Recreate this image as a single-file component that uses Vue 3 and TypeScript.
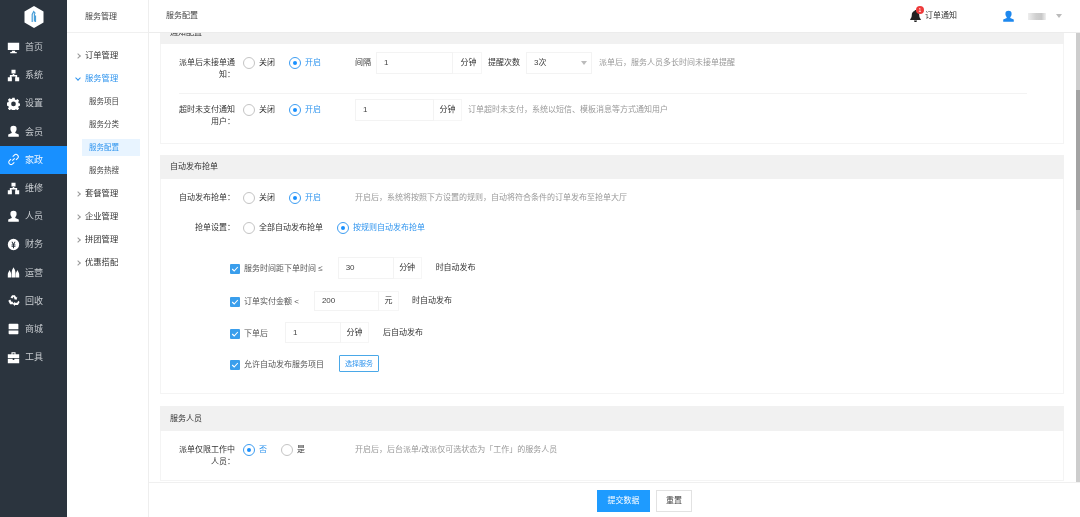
<script setup lang="ts">
interface NavItem { label: string; icon: string; active?: boolean }
const monitor = 'M1 2h14v9H1z M6 12h4v1.5h2V15H4v-1.5h2z'
const tree = 'M5.5 1h5v4.5h-5z M1 10h5v5H1z M10 10h5v5h-5z M7 5h2v2.5h3.5V10h-2V9.2h-5V10h-2V7.5H7z'
const gear = 'M6.6 1h2.8l.4 2 1.3.6 1.8-1.1 2 2-1.1 1.8.6 1.3 2 .4v2.8l-2 .4-.6 1.3 1.1 1.8-2 2-1.8-1.1-1.3.6-.4 2H6.6l-.4-2-1.3-.6-1.8 1.1-2-2 1.1-1.8-.6-1.3-2-.4V7l2-.4.6-1.3-1.1-1.8 2-2 1.8 1.1 1.3-.6zM8 5.6a2.9 2.9 0 1 0 0 5.8 2.9 2.9 0 0 0 0-5.8z'
const user = 'M8 1a3.8 3.8 0 0 1 3.8 4c0 1.6-.7 3-1.6 3.8v1l4.3 2v2.7h-13v-2.7l4.300-2v-1C5 8 4.200 6.600 4.200 5A3.800 3.800 0 0 1 8 1z'
const coin = 'M8 1a7 7 0 1 1 0 14A7 7 0 0 1 8 1zM5.500 4.500 7.200 8H5.600v1.100h1.800V10H5.600v1.100h1.800v1.400h1.200v-1.400h1.800V10H8.600v-.9h1.800V8H8.800l1.700-3.500H9.200L8 7.200 6.800 4.500z'
const flame = 'M3 5c.8 1.600 2.200 3 2.200 5.500V14H1v-3.500C1 8.500 2.400 7 3 5z M8 1.500c.9 2 2.400 3.500 2.400 6.500v6H5.800V8C5.800 5 7.100 3.500 8 1.500z M13 5c.6 2 2 3.500 2 5.500V14h-4.200v-3.500C10.800 8 12.200 6.600 13 5z'
const recycle = 'M6.300 1.500h3.400l1.700 2.800 1.300-.8-.9 3.700-3.700-.9 1.300-.8L8 3.400 6.700 5.600 4.300 4.200z M1.600 8.300l2.400-1.400 1.500 2.600H7.300v3.200H3.800z M14.500 8.300l.9 1.800-1.900 3.300H9.600V15l-2.500-3 2.500-2.600v1.300h2.900l.6-1.100z'
const inbox = 'M3 2h10a1 1 0 0 1 1 1v6H2V3a1 1 0 0 1 1-1z M2 10.500h12V14a1 1 0 0 1-1 1H3a1 1 0 0 1-1-1z'
const briefcase = 'M5.500 1.500h5v2.500H15v4.500H1V4h4.500zM6.800 2.800V4h2.400V2.800z M1 9.500h6v1.500h2V9.500h6V15H1z'
const nav: NavItem[] = [
  { label: '首页', icon: monitor },
  { label: '系统', icon: tree },
  { label: '设置', icon: gear },
  { label: '会员', icon: user },
  { label: '家政', icon: '', active: true },
  { label: '维修', icon: tree },
  { label: '人员', icon: user },
  { label: '财务', icon: coin },
  { label: '运营', icon: flame },
  { label: '回收', icon: recycle },
  { label: '商城', icon: inbox },
  { label: '工具', icon: briefcase },
]
const subTop = ['订单管理']
const subLeaf = ['服务项目', '服务分类', '服务配置', '服务热搜']
const subBottom = ['套餐管理', '企业管理', '拼团管理', '优惠搭配']
const ruleRows = [
  { before: '服务时间距下单时间 ≤', value: '30', unit: '分钟', after: '时自动发布', cls: 'r1' },
  { before: '订单实付金额 <', value: '200', unit: '元', after: '时自动发布', cls: 'r2' },
  { before: '下单后', value: '1', unit: '分钟', after: '后自动发布', cls: 'r3' },
]
</script>

<template>
  <div class="app">
    <aside class="nav">
      <div class="logo">
        <svg width="20" height="22" viewBox="0 0 20 22">
          <path d="M10 0l9.500 5.500v11L10 22 .5 16.500v-11z" fill="#fff" />
          <path d="M8.200 16V8.500l1.500-3 1.300 1.500-.6 1v7.500M11.500 9.500V16" fill="none" stroke="#4a9fd8" stroke-width="1.200" />
        </svg>
      </div>
      <div v-for="item in nav" :key="item.label" class="nav-item" :class="{ active: item.active }">
        <svg class="nav-icon" width="13" height="13" viewBox="0 0 16 16">
          <path v-if="item.icon" :d="item.icon" fill="#fff" fill-rule="evenodd" />
          <g v-else fill="none" stroke="#fff" stroke-width="1.300">
            <path d="M6.500 9.500l3-3" />
            <path d="M7 4.500l2-2a2.800 2.800 0 0 1 4 4l-2 2" />
            <path d="M9 11.500l-2 2a2.800 2.800 0 0 1-4-4l2-2" />
          </g>
        </svg>
        <span>{{ item.label }}</span>
      </div>
    </aside>

    <aside class="sub">
      <div class="sub-title">服务管理</div>
      <div class="sub-list">
        <div v-for="s in subTop" :key="s" class="sub-group"><i class="chev"></i>{{ s }}</div>
        <div class="sub-group open"><i class="chev down"></i>服务管理</div>
        <div v-for="s in subLeaf" :key="s" class="sub-leaf" :class="{ on: s === '服务配置' }">{{ s }}</div>
        <div v-for="s in subBottom" :key="s" class="sub-group"><i class="chev"></i>{{ s }}</div>
      </div>
    </aside>

    <main class="main">
      <header class="top">
        <span class="crumb">服务配置</span>
        <div class="notice">
          <span class="bell">
            <svg width="11" height="12" viewBox="0 0 11 12"><path d="M5.500 0c.6 0 1 .4 1 .9C8.300 1.400 9.200 3 9.200 4.800c0 2 .4 3.200 1.600 4.400v.8H.2v-.8C1.400 8 1.800 6.800 1.800 4.800 1.800 3 2.700 1.400 4.500.9c0-.5.4-.9 1-.9zM4 10.600h3A1.500 1.500 0 0 1 4 10.600z" fill="#222" /></svg>
            <b class="badge">1</b>
          </span>
          <span>订单通知</span>
        </div>
        <div class="account">
          <svg class="avatar" width="13" height="13" viewBox="0 0 16 16"><path :d="user" fill="#1e88ee" /></svg>
          <span class="masked"></span>
          <i class="caret"></i>
        </div>
      </header>

      <div class="scroll">
        <section class="panel first">
          <div class="head clipped">通知配置</div>
          <div class="row a1">
            <label class="lbl">派单后未接单通知&#xFF1A;</label>
            <div class="radios">
              <span class="radio"><i></i>关闭</span>
              <span class="radio on"><i></i>开启</span>
            </div>
            <span class="txt">间隔</span>
            <span class="field w77"><em>1</em></span><span class="addon w29">分钟</span>
            <span class="txt g6">提醒次数</span>
            <span class="field sel"><em>3次</em><i class="caret"></i></span>
            <span class="hint g7">派单后&#xFF0C;服务人员多长时间未接单提醒</span>
          </div>
          <div class="row a2">
            <label class="lbl">超时未支付通知用户&#xFF1A;</label>
            <div class="radios">
              <span class="radio"><i></i>关闭</span>
              <span class="radio on"><i></i>开启</span>
            </div>
            <span class="field w79"><em>1</em></span><span class="addon w28">分钟</span>
            <span class="hint g6">订单超时未支付&#xFF0C;系统以短信、模板消息等方式通知用户</span>
          </div>
        </section>

        <section class="panel second">
          <div class="head">自动发布抢单</div>
          <div class="row b1">
            <label class="lbl">自动发布抢单&#xFF1A;</label>
            <div class="radios">
              <span class="radio"><i></i>关闭</span>
              <span class="radio on"><i></i>开启</span>
            </div>
            <span class="hint">开启后&#xFF0C;系统将按照下方设置的规则&#xFF0C;自动将符合条件的订单发布至抢单大厅</span>
          </div>
          <div class="row b2">
            <label class="lbl">抢单设置&#xFF1A;</label>
            <div class="radios wide">
              <span class="radio"><i></i>全部自动发布抢单</span>
              <span class="radio on"><i></i>按规则自动发布抢单</span>
            </div>
          </div>
          <div class="rules">
            <div v-for="r in ruleRows" :key="r.before" class="rule" :class="r.cls">
              <span class="check"><svg width="8" height="8" viewBox="0 0 8 8"><path d="M1.200 4l2 2 3.600-4" fill="none" stroke="#fff" stroke-width="1.100" /></svg></span>
              <span class="rule-text">{{ r.before }}</span>
              <span class="field"><em>{{ r.value }}</em></span><span class="addon">{{ r.unit }}</span>
              <span class="txt after">{{ r.after }}</span>
            </div>
            <div class="rule r4">
              <span class="check"><svg width="8" height="8" viewBox="0 0 8 8"><path d="M1.200 4l2 2 3.600-4" fill="none" stroke="#fff" stroke-width="1.100" /></svg></span>
              <span class="rule-text">允许自动发布服务项目</span>
              <button class="pick" type="button">选择服务</button>
            </div>
          </div>
        </section>

        <section class="panel third">
          <div class="head tall">服务人员</div>
          <div class="row c1">
            <label class="lbl">派单仅限工作中人员&#xFF1A;</label>
            <div class="radios">
              <span class="radio on"><i></i>否</span>
              <span class="radio"><i></i>是</span>
            </div>
            <span class="hint">开启后&#xFF0C;后台派单/改派仅可选状态为「工作」的服务人员</span>
          </div>
        </section>

        <div class="bar"><span class="thumb"></span></div>
      </div>

      <footer class="foot">
        <button class="btn primary" type="button">提交数据</button>
        <button class="btn" type="button">重置</button>
      </footer>
    </main>
  </div>
</template>

<style>
html, body { margin: 0; padding: 0; background: #fff; }
</style>

<style scoped>
.app {
  width: 1080px;
  height: 517px;
  display: flex;
  overflow: hidden;
  font: 8px/12px "Liberation Sans", "Noto Sans CJK SC", sans-serif;
  color: #444;
  background: #fff;
  filter: blur(0.3px);
}
.nav { width: 67px; flex: none; background: #2b343e; }
.logo { height: 33px; display: flex; align-items: center; justify-content: center; }
.nav-item {
  height: 28.2px;
  display: flex;
  align-items: center;
  padding-left: 7px;
  gap: 5px;
  font-size: 9px;
  color: #c8ccd0;
}
.nav-item.active { background: #1890ff; color: #eaf4ff; }
.nav-icon { flex: none; }

.sub { width: 82px; flex: none; border-right: 1px solid #eee; box-sizing: border-box; }
.sub-title {
  height: 33px;
  line-height: 34px;
  padding-left: 18px;
  border-bottom: 1px solid #f0f0f0;
  box-sizing: border-box;
  color: #444;
}
.sub-list { padding-top: 11px; display: flex; flex-direction: column; }
.sub-group {
  height: 23px;
  line-height: 23px;
  padding-left: 18px;
  font-size: 8.300px;
  color: #333;
  position: relative;
}
.sub-group.open { color: #2f94ee; }
.chev {
  position: absolute;
  left: 9px;
  top: 10px;
  width: 3px;
  height: 3px;
  border-right: 1px solid #999;
  border-top: 1px solid #999;
  transform: rotate(45deg);
}
.chev.down { border-color: #2f94ee; transform: rotate(135deg); top: 9px; }
.sub-leaf {
  height: 17px;
  line-height: 17px;
  margin: 3px 8px 3px 15px;
  padding-left: 7px;
  font-size: 7.500px;
  color: #444;
}
.sub-leaf.on { background: #e8f4ff; color: #2f94ee; }

.main { flex: 1; min-width: 0; display: flex; flex-direction: column; }
.top {
  height: 33px;
  flex: none;
  display: flex;
  align-items: center;
  padding-left: 17px;
  border-bottom: 1px solid #ececec;
  box-sizing: border-box;
  position: relative;
  z-index: 2;
  background: #fff;
}
.crumb { flex: 1; }
.notice { display: flex; align-items: center; gap: 4px; color: #333; }
.bell { position: relative; display: flex; }
.badge {
  position: absolute;
  left: 6px;
  top: -4px;
  width: 8px;
  height: 8px;
  border-radius: 50%;
  background: #ee3b3b;
  color: #fff;
  font: 5px/8px "Liberation Sans", sans-serif;
  text-align: center;
}
.account { display: flex; align-items: center; margin-left: 46px; width: 77px; }
.avatar { margin-left: -1px; }
.masked {
  width: 18px;
  height: 7px;
  margin-left: 13px;
  background: linear-gradient(90deg, #eee, #cfcfcf 45%, #c8c8c8 75%, #f0f0f0);
}
.caret {
  display: block;
  width: 0;
  height: 0;
  border: 3px solid transparent;
  border-top: 4px solid #bbb;
  border-bottom: 0;
}
.account .caret { margin-left: 10px; }

.scroll { flex: 1; min-height: 0; position: relative; overflow: hidden; padding: 0 16px 0 11px; }
.panel { border: 1px solid #f4f4f4; border-top: 0; width: 904px; box-sizing: border-box; }
.head {
  margin: 0 -1px;
  height: 24px;
  line-height: 24px;
  padding-left: 10px;
  background: #f1f1f1;
  color: #333;
}
.head.tall { height: 25px; line-height: 25px; }
.head.clipped { line-height: 26px; }
.first { margin-top: -13px; height: 124px; }
.second { margin-top: 11px; height: 239px; }
.third { margin-top: 12px; height: 75px; }

.row { display: flex; align-items: center; height: 22px; margin-left: 18px; }
.row > .lbl { align-self: flex-start; }
.lbl {
  width: 56px;
  flex: none;
  margin-right: 8px;
  text-align: right;
  color: #333;
  padding-top: 5px;
}
.a1 { margin-top: 8px; margin-right: 36px; padding-bottom: 19px; border-bottom: 1px solid #f3f3f3; box-sizing: content-box; }
.a2 { margin-top: 5px; }
.b1 { margin-top: 8px; }
.b2 { margin-top: 8px; }
.c1 { margin-top: 8px; }
.radios { width: 112px; flex: none; display: flex; gap: 14px; }
.radios.wide { width: auto; }
.radio { display: flex; align-items: center; gap: 4px; color: #333; white-space: nowrap; }
.radio i {
  width: 12px;
  height: 12px;
  flex: none;
  box-sizing: border-box;
  border: 1px solid #c4c4c4;
  border-radius: 50%;
  background: #fff;
  position: relative;
}
.radio.on { color: #2f94ee; }
.radio.on i { border-color: #3d9df2; }
.radio.on i::after {
  content: "";
  position: absolute;
  left: 3px;
  top: 3px;
  width: 4px;
  height: 4px;
  border-radius: 50%;
  background: #1890ff;
}
.txt { color: #333; white-space: nowrap; }
.g6 { margin-left: 6px; }
.g7 { margin-left: 7px; }
.a1 .txt:first-of-type { margin-right: 5px; }
.a1 .txt.g6 { margin-right: 6px; }
.field {
  height: 22px;
  box-sizing: border-box;
  display: flex;
  align-items: center;
  justify-content: space-between;
  padding: 0 7px;
  border: 1px solid #f3f3f3;
  background: #fff;
  color: #444;
}
.field em { font-style: normal; }
.addon {
  height: 22px;
  box-sizing: border-box;
  display: flex;
  align-items: center;
  justify-content: center;
  flex: none;
  border: 1px solid #f6f6f6;
  border-left: 0;
  color: #333;
}
.w77 { width: 77px; }
.w79 { width: 79px; }
.w29 { width: 29px; padding-left: 3px; }
.w28 { width: 28px; }
.sel { width: 66px; padding-right: 4px; }
.hint { color: #999; white-space: nowrap; }

.rules { margin: 18px 0 0 69px; display: flex; flex-direction: column; }
.rule { display: flex; align-items: center; }
.check {
  width: 10px;
  height: 10px;
  flex: none;
  margin-top: 2px;
  border-radius: 1px;
  background: #3a9eec;
  display: flex;
  align-items: center;
  justify-content: center;
}
.rule-text { margin: 2px 0 0 4px; color: #555; white-space: nowrap; }
.r1 .field { margin-left: 15px; width: 56px; }
.r1 .addon { width: 28px; }
.r1 .after { margin-left: 14px; }
.r2 { margin-top: 12px; }
.r2 .field { margin-left: 15px; width: 65px; height: 20px; }
.r2 .addon { width: 20px; height: 20px; }
.r2 .after { margin-left: 13px; }
.r3 { margin-top: 11px; }
.r3 .field { margin-left: 17px; width: 56px; height: 21px; }
.r3 .addon { width: 28px; height: 21px; }
.r3 .after { margin-left: 14px; }
.r4 { margin-top: 12px; }
.pick {
  margin-left: 15px;
  width: 40px;
  height: 17px;
  padding: 0;
  box-sizing: border-box;
  border: 1px solid #4aa8e8;
  border-radius: 1px;
  background: #fff;
  color: #2f94ee;
  font: 7px/15px "Liberation Sans", "Noto Sans CJK SC", sans-serif;
}

.bar { position: absolute; top: 0; right: 0; width: 4px; height: 100%; background: #cdcdcd; }
.thumb { display: block; margin-top: 57px; height: 120px; background: #a3a3a3; }

.foot {
  height: 35px;
  flex: none;
  display: flex;
  justify-content: center;
  align-items: flex-start;
  gap: 6px;
  padding: 7px 0 0 60px;
  box-sizing: border-box;
  border-top: 1px solid #f0f0f0;
  background: #fff;
}
.btn {
  width: 36px;
  height: 22px;
  padding: 0;
  box-sizing: border-box;
  border: 1px solid #e2e2e2;
  background: #fff;
  color: #444;
  font: 8px/20px "Liberation Sans", "Noto Sans CJK SC", sans-serif;
}
.btn.primary { width: 53px; border-color: #1e9bff; background: #1e9bff; color: #fff; }
</style>
